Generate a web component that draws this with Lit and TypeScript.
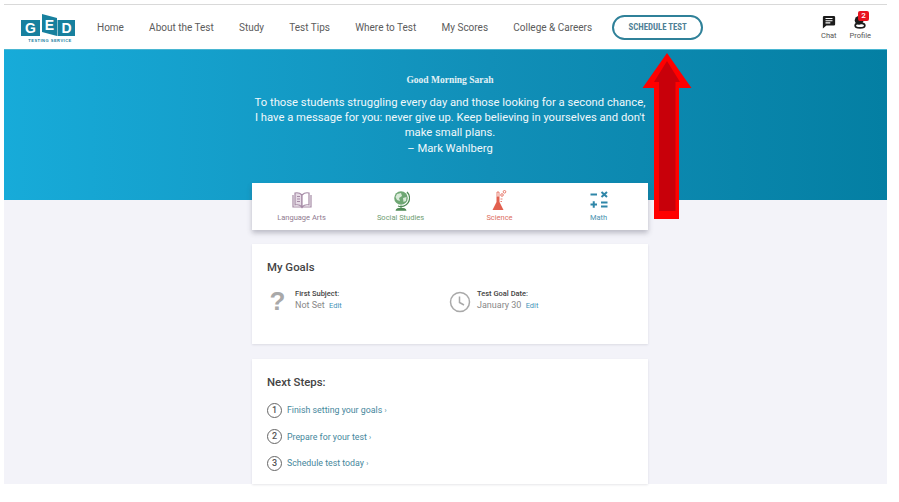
import {css, html, LitElement, svg} from 'lit'
import {customElement} from 'lit/decorators.js'

const NAV = ['Home', 'About the Test', 'Study', 'Test Tips', 'Where to Test', 'My Scores', 'College & Careers']
const STEPS = ['Finish setting your goals', 'Prepare for your test', 'Schedule test today']

const bookIcon = svg`<svg width="20" height="18" viewBox="0 0 20 18" fill="#e6dbe6" stroke="#a58aa5" stroke-width="1.2">
    <path d="M10 4 C8 2 5 1.500 3 2 V14 C5 13.500 8 14 10 16 Z"/>
    <path d="M10 4 C12 2 15 1.500 17 2 V14 C15 13.500 12 14 10 16 Z" fill="#fff"/>
    <path d="M1 4 V16 H19 V4" fill="none"/>
    <path d="M5 5.500 H8 M5 8 H8 M5 10.500 H8" stroke-width="1"/>
</svg>`

const globeIcon = svg`<svg width="18" height="21" viewBox="0 0 18 21">
    <circle cx="9" cy="8" r="6.800" fill="#6fa774"/>
    <path d="M5 4 L9 3 L10 6 L7 8 L8 11 L5 10 L3.500 7 Z M11 8 L14.500 7 L14 11 L11.500 12 Z" fill="#d9ead9"/>
    <path d="M15 2 A8.500 8.500 0 0 1 6 16" fill="none" stroke="#4f8a55" stroke-width="1.200"/>
    <path d="M9 15.500 V17.500 M4.500 20 C5 18 13 18 13.500 20 Z" fill="#4f8a55" stroke="#4f8a55" stroke-width="1.400"/>
</svg>`

const flaskIcon = svg`<svg width="16" height="21" viewBox="0 0 16 21">
    <path d="M4.500 7 H7.500 V12 L11.500 20 H0.500 L4.500 12 Z" fill="#e2604f"/>
    <path d="M5 2 H7 V7 H5 Z" fill="#fff" stroke="#e2604f" stroke-width="0.800"/>
    <circle cx="10" cy="5" r="1.300" fill="none" stroke="#e2604f" stroke-width="0.800"/>
    <circle cx="12.500" cy="1.800" r="1.300" fill="none" stroke="#e2604f" stroke-width="0.800"/>
    <path d="M8.500 9 H10.500 M8.500 11.500 H10" stroke="#e2604f" stroke-width="0.800"/>
</svg>`

const mathIcon = svg`<svg width="20" height="20" viewBox="0 0 20 20" stroke="#2f86a8" stroke-width="2" fill="none">
    <path d="M1.500 4.500 H8"/>
    <path d="M12.500 2 L18 7 M18 2 L12.500 7"/>
    <path d="M1.500 14.500 H8 M4.750 11.200 V17.800"/>
    <path d="M12 12.500 H18.500 M12 16.500 H18.500"/>
</svg>`

const SUBJECTS = [
    {name: 'Language Arts', color: '#8f7a8f', icon: bookIcon},
    {name: 'Social Studies', color: '#6d9c72', icon: globeIcon},
    {name: 'Science', color: '#dd6f62', icon: flaskIcon},
    {name: 'Math', color: '#4a93b0', icon: mathIcon},
]

@customElement('app-root')
export class AppRoot extends LitElement {

    render() {
        return html`
            <div class="page">
                <header class="nav">
                    <svg class="logo" width="54" height="30" viewBox="0 0 54 30">
                        <rect x="0" y="6" width="19" height="16" fill="#17809e"/>
                        <path d="M21 0 L36 4 V22 L21 18 Z" fill="#17809e"/>
                        <rect x="36.500" y="6" width="17.500" height="16" fill="#17809e"/>
                        <text x="9.500" y="19" class="logo-letter" text-anchor="middle">G</text>
                        <text x="28.500" y="16" class="logo-letter" text-anchor="middle">E</text>
                        <text x="45.500" y="19" class="logo-letter" text-anchor="middle">D</text>
                        <text x="29" y="28" class="logo-sub" text-anchor="middle">TESTING SERVICE</text>
                    </svg>
                    <nav class="links">
                        ${NAV.map(n => html`<span>${n}</span>`)}
                    </nav>
                    <div class="schedule">SCHEDULE TEST</div>
                    <div class="side">
                        <div class="side-item">
                            <svg width="14" height="14" viewBox="0 0 16 16">
                                <path d="M2.500 1 H13.500 Q15 1 15 2.500 V10.500 Q15 12 13.500 12 H5 L1 15.500 V2.500 Q1 1 2.500 1 Z" fill="#1c1c1c"/>
                                <path d="M4 4 H12 M4 6.500 H12 M4 9 H9.500" stroke="#fff" stroke-width="1.200"/>
                            </svg>
                            <span>Chat</span>
                        </div>
                        <div class="side-item">
                            <svg width="14" height="14" viewBox="0 0 16 16">
                                <circle cx="7" cy="6" r="5" fill="#1c1c1c"/>
                                <ellipse cx="8" cy="12" rx="5.500" ry="2.800" fill="none" stroke="#1c1c1c" stroke-width="2"/>
                            </svg>
                            <span>Profile</span>
                            <b class="badge">2</b>
                        </div>
                    </div>
                </header>

                <section class="hero">
                    <div class="greeting">Good Morning Sarah</div>
                    <p class="quote">To those students struggling every day and those looking for a second chance, I have a message for you: never give up. Keep believing in yourselves and don't make small plans.<br>&ndash; Mark Wahlberg</p>
                </section>

                <main class="content">
                    <div class="subjects">
                        ${SUBJECTS.map(s => html`
                            <div class="subject" style="color:${s.color}">
                                <div class="subject-icon">${s.icon}</div>
                                <span>${s.name}</span>
                            </div>
                        `)}
                    </div>

                    <div class="card goals">
                        <h2>My Goals</h2>
                        <div class="goal-row">
                            <div class="goal">
                                <span class="question">?</span>
                                <div>
                                    <div class="goal-title">First Subject:</div>
                                    <div class="goal-value">Not Set <a>Edit</a></div>
                                </div>
                            </div>
                            <div class="goal">
                                <svg width="22" height="22" viewBox="0 0 22 22" fill="none" stroke="#a9a9a9" stroke-width="1.500">
                                    <circle cx="11" cy="11" r="9.500"/>
                                    <path d="M10.500 5.500 V11.500 L15 14"/>
                                </svg>
                                <div>
                                    <div class="goal-title">Test Goal Date:</div>
                                    <div class="goal-value">January 30 <a>Edit</a></div>
                                </div>
                            </div>
                        </div>
                    </div>

                    <div class="card steps">
                        <h2>Next Steps:</h2>
                        ${STEPS.map((s, i) => html`
                            <div class="step">
                                <span class="num">${i + 1}</span>
                                <a>${s} <small>&rsaquo;</small></a>
                            </div>
                        `)}
                    </div>
                </main>

                <svg class="arrow" width="50" height="167" viewBox="0 0 50 167">
                    <path d="M25 0 L49.500 35 H37 V166 H12 V35 H0.500 Z" fill="#ff0000"/>
                    <path d="M25 8 L38 29 H33.500 V158 H17 V29 H12 Z" fill="#c8000a"/>
                </svg>
            </div>
        `
    }

    static styles = css`
      :host {
        display: block;
        font-family: Roboto, 'Liberation Sans', sans-serif;
      }

      .page {
        position: relative;
        width: 899px;
        height: 502px;
        background: #fff;
        overflow: hidden;
      }

      .nav {
        display: flex;
        align-items: center;
        box-sizing: border-box;
        width: 883px;
        height: 45px;
        margin: 4px 0 0 4px;
        padding: 0 0 0 17px;
        border-top: 1px solid #d9d9d9;
      }

      .logo {
        flex: none;
        margin-top: 3px;
      }

      .logo-letter {
        font: bold 14px 'Liberation Sans', sans-serif;
        fill: #fff;
      }

      .logo-sub {
        font: bold 4px 'Liberation Sans', sans-serif;
        fill: #17809e;
        letter-spacing: 0.5px;
      }

      .links {
        display: flex;
        gap: 25.200px;
        margin-left: 22px;
        font-size: 10px;
        color: #5c5c5c;
        white-space: nowrap;
      }

      .schedule {
        box-sizing: border-box;
        width: 91px;
        height: 25px;
        margin-left: 20px;
        border: 2px solid #2f8199;
        border-radius: 13px;
        font-family: 'Roboto Condensed', Roboto, sans-serif;
        font-size: 8.800px;
        font-weight: 700;
        line-height: 21px;
        text-align: center;
        color: #4f8196;
      }

      .side {
        display: flex;
        gap: 13px;
        margin-left: auto;
        margin-right: 16px;
      }

      .side-item {
        position: relative;
        display: flex;
        flex-direction: column;
        align-items: center;
        gap: 2px;
        font-size: 7.500px;
        color: #555;
      }

      .badge {
        position: absolute;
        top: -4px;
        right: 2px;
        width: 11px;
        height: 10px;
        border-radius: 2px;
        background: #e8131f;
        color: #fff;
        font-size: 8px;
        font-weight: 500;
        line-height: 10px;
        text-align: center;
      }

      .hero {
        box-sizing: border-box;
        width: 883px;
        height: 151px;
        margin-left: 4px;
        padding: 25px 0 0 9px;
        background: linear-gradient(90deg, #17abd9 0%, #118fb8 55%, #047fa3 100%);
        border-top: 1px solid #49b6d2;
        color: #fff;
        text-align: center;
      }

      .greeting {
        font-family: 'Liberation Serif', serif;
        font-size: 9.500px;
        font-weight: 700;
        line-height: 10px;
        color: #e3f1f6;
      }

      .quote {
        width: 396px;
        margin: 10px auto 0;
        font-size: 11.250px;
        line-height: 15.200px;
        color: #f0f8fb;
      }

      .content {
        box-sizing: border-box;
        display: flex;
        flex-direction: column;
        align-items: center;
        width: 883px;
        height: 284px;
        margin-left: 4px;
        padding-left: 9px;
        background: #f3f3f9;
      }

      .subjects {
        display: grid;
        grid-template-columns: repeat(4, 1fr);
        box-sizing: border-box;
        flex: none;
        width: 396px;
        height: 47px;
        margin-top: -17px;
        background: #fff;
        box-shadow: 0 3px 5px rgba(60, 60, 80, 0.3);
      }

      .subject {
        display: flex;
        flex-direction: column;
        align-items: center;
        font-size: 7.500px;
        padding-top: 6px;
      }

      .subject-icon {
        display: flex;
        align-items: center;
        height: 22px;
        margin-bottom: 2px;
      }

      .card {
        box-sizing: border-box;
        flex: none;
        width: 396px;
        padding: 16px 15px 0;
        background: #fff;
        box-shadow: 0 1px 2px rgba(60, 60, 80, 0.12);
      }

      h2 {
        margin: 0;
        font-size: 11.400px;
        font-weight: 500;
        line-height: 15px;
        color: #444;
      }

      .goals {
        height: 100px;
        margin-top: 14px;
      }

      .goal-row {
        display: grid;
        grid-template-columns: 183px 1fr;
        margin-top: 14px;
      }

      .goal {
        display: flex;
        align-items: flex-start;
        gap: 7px;
      }

      .question {
        width: 21px;
        margin-top: -2px;
        font-family: 'Liberation Sans', sans-serif;
        font-size: 26px;
        font-weight: 700;
        line-height: 28px;
        text-align: center;
        color: #a9a9a9;
      }

      .goal svg {
        margin: 2px -1px 0 -1px;
      }

      .goal-title {
        font-size: 7.500px;
        font-weight: 500;
        line-height: 10px;
        margin-top: 0;
        color: #444;
      }

      .goal-value {
        font-size: 9px;
        line-height: 13px;
        color: #888;
      }

      .goal-value a {
        margin-left: 2px;
        font-size: 7.500px;
        color: #3f93b8;
      }

      .steps {
        height: 125px;
        margin-top: 15px;
      }

      .step {
        display: flex;
        align-items: center;
        gap: 5px;
        height: 16px;
        margin-top: 10.500px;
      }

      .steps h2 {
        margin-bottom: 12px;
      }

      .num {
        box-sizing: border-box;
        width: 15px;
        height: 15px;
        border: 1.200px solid #666;
        border-radius: 50%;
        font-size: 9px;
        font-weight: 500;
        line-height: 12.500px;
        text-align: center;
        color: #555;
      }

      .step a {
        font-size: 8.800px;
        color: #46879c;
      }

      .step small {
        font-size: 7px;
      }

      .arrow {
        position: absolute;
        left: 642px;
        top: 53px;
      }
    `
}

declare global {
    interface HTMLElementTagNameMap {
        'app-root': AppRoot
    }
}
